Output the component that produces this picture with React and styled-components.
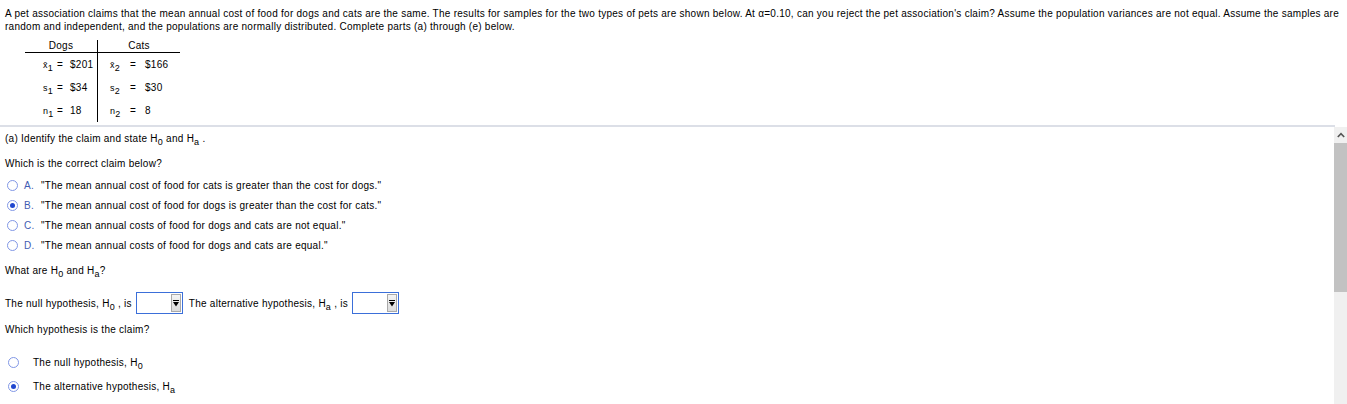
import React from "react";
import styled, { createGlobalStyle } from "styled-components";

const GlobalStyle = createGlobalStyle`
  html, body { margin: 0; padding: 0; background: #fff; }
  body {
    font-family: "Liberation Sans", Arial, sans-serif;
    font-size: 10px;
    letter-spacing: 0.26px;
    color: #000;
  }
`;

const Page = styled.div`
  width: 1347px;
  height: 404px;
  overflow: hidden;
  display: flex;
  flex-direction: column;
`;

const Intro = styled.div`
  padding: 7px 5px 0 5px;
  line-height: 13px;
`;

const IntroLine = styled.span`
  display: block;
  white-space: nowrap;
`;

const DataTable = styled.div`
  margin: 7px 0 0 25px;
  display: grid;
  grid-template-columns: 73px 82px;
  width: 155px;
`;

const HeadCell = styled.div`
  height: 12px;
  line-height: 12px;
  text-align: center;
  border-bottom: 1px solid #000;
  border-right: ${(p) => (p.$divider ? "1px solid #000" : "none")};
`;

const DataCell = styled.div`
  height: 23px;
  display: flex;
  align-items: center;
  padding-left: ${(p) => p.$pad}px;
  border-right: ${(p) => (p.$divider ? "1px solid #000" : "none")};
  white-space: nowrap;
`;

const VarSlot = styled.span`
  display: inline-block;
  width: ${(p) => p.$w}px;
  font-size: 9px;
`;

const EqSlot = styled.span`
  display: inline-block;
  width: ${(p) => p.$w}px;
`;

const Sub = styled.sub`
  font-size: ${(p) => p.$size || 9}px;
  vertical-align: -3px;
  line-height: 0;
`;

const Divider = styled.div`
  margin-top: 3px;
  height: 2px;
  width: 1335px;
  background: #dcdfe7;
  flex: none;
`;

const Pane = styled.div`
  flex: 1;
  display: flex;
  min-height: 0;
`;

const Content = styled.div`
  flex: 1;
  padding: 5px 0 0 5px;
`;

const TextLine = styled.div`
  line-height: 13px;
  margin-top: ${(p) => p.$mt || 0}px;
  white-space: nowrap;
`;

const OptionList = styled.div`
  margin-top: ${(p) => p.$mt}px;
  display: flex;
  flex-direction: column;
`;

const OptionRow = styled.div`
  height: ${(p) => p.$h}px;
  display: flex;
  align-items: center;
  white-space: nowrap;
`;

const Label = styled.span`
  line-height: 13px;
  white-space: nowrap;
`;

const Radio = styled.span`
  box-sizing: border-box;
  width: 11px;
  height: 11px;
  margin-left: ${(p) => p.$ml}px;
  margin-right: ${(p) => p.$mr}px;
  border-radius: 50%;
  border: 1.5px solid #8197e6;
  background: #fff;
  display: inline-flex;
  align-items: center;
  justify-content: center;
  flex: none;
  &::after {
    content: "";
    display: ${(p) => (p.$checked ? "block" : "none")};
    width: 5px;
    height: 5px;
    border-radius: 50%;
    background: #1f46cf;
  }
`;

const Letter = styled.span`
  display: inline-block;
  width: 17px;
  color: #3f5cb3;
`;

const HypRow = styled.div`
  margin-top: 15px;
  height: 22px;
  display: flex;
  align-items: center;
  white-space: nowrap;
`;

const Select = styled.span`
  box-sizing: border-box;
  width: 47px;
  height: 22px;
  margin: 0 6px 0 4px;
  border: 1px solid #3b6fd9;
  background: #fff;
  display: inline-flex;
  justify-content: flex-end;
  align-items: center;
  padding-right: 1px;
  flex: none;
`;

const SelectButton = styled.span`
  box-sizing: border-box;
  width: 10px;
  height: 18px;
  border: 1px solid #a9a9a9;
  background: linear-gradient(#f4f4f4, #dcdcdc);
  display: inline-flex;
  align-items: center;
  justify-content: center;
`;

const Scrollbar = styled.div`
  width: 13px;
  flex: none;
  background: #f0f0f0;
  display: flex;
  flex-direction: column;
`;

const ScrollButton = styled.div`
  height: 16px;
  display: flex;
  align-items: center;
  justify-content: center;
`;

const Thumb = styled.div`
  height: 149px;
  background: #c2c2c2;
`;

const H = ({ s }) => (
  <>
    H<Sub>{s}</Sub>
  </>
);

const Var = ({ v, i, w }) => (
  <VarSlot $w={w}>
    {v}
    <Sub $size={9}>{i}</Sub>
  </VarSlot>
);

const rows = [
  { l: ["x\u0304", "1", "$201"], r: ["x\u0304", "2", "$166"] },
  { l: ["s", "1", "$34"], r: ["s", "2", "$30"] },
  { l: ["n", "1", "18"], r: ["n", "2", "8"] },
];

const claims = [
  { k: "A.", t: "\"The mean annual cost of food for cats is greater than the cost for dogs.\"" },
  { k: "B.", t: "\"The mean annual cost of food for dogs is greater than the cost for cats.\"", c: true },
  { k: "C.", t: "\"The mean annual costs of food for dogs and cats are not equal.\"" },
  { k: "D.", t: "\"The mean annual costs of food for dogs and cats are equal.\"" },
];

const Caret = () => (
  <svg width="8" height="6" viewBox="0 0 8 6">
    <path d="M0.8 5 L4 1.6 L7.2 5" fill="none" stroke="#555" strokeWidth="1.6" />
  </svg>
);

const DownIcon = () => (
  <svg width="6" height="7" viewBox="0 0 6 7">
    <rect x="0" y="0" width="6" height="1" fill="#000" />
    <path d="M0 2 L6 2 L3 6.5 Z" fill="#000" />
  </svg>
);

const Dropdown = () => (
  <Select>
    <SelectButton>
      <DownIcon />
    </SelectButton>
  </Select>
);

export default function App() {
  return (
    <>
      <GlobalStyle />
      <Page>
        <Intro>
          <IntroLine>
            A pet association claims that the mean annual cost of food for dogs and cats are the same. The results for samples for the two types of pets are shown below. At α=0.10, can you reject the pet association's claim? Assume the population variances are not equal. Assume the samples are
          </IntroLine>
          <IntroLine>
            random and independent, and the populations are normally distributed. Complete parts (a) through (e) below.
          </IntroLine>
        </Intro>
        <DataTable>
          <HeadCell $divider>Dogs</HeadCell>
          <HeadCell>Cats</HeadCell>
          {rows.map((r, idx) => (
            <React.Fragment key={idx}>
              <DataCell $divider $pad={18}>
                <Var v={r.l[0]} i={r.l[1]} w={14} />
                <EqSlot $w={13}>=</EqSlot>
                {r.l[2]}
              </DataCell>
              <DataCell $pad={12}>
                <Var v={r.r[0]} i={r.r[1]} w={20} />
                <EqSlot $w={15}>=</EqSlot>
                {r.r[2]}
              </DataCell>
            </React.Fragment>
          ))}
        </DataTable>
        <Divider />
        <Pane>
          <Content>
            <TextLine>
              (a) Identify the claim and state <H s="0" /> and <H s="a" /> .
            </TextLine>
            <TextLine $mt={12}>Which is the correct claim below?</TextLine>
            <OptionList $mt={5}>
              {claims.map((c) => (
                <OptionRow key={c.k} $h={20}>
                  <Radio $ml={2} $mr={6} $checked={c.c} />
                  <Letter>{c.k}</Letter>
                  <Label>{c.t}</Label>
                </OptionRow>
              ))}
            </OptionList>
            <TextLine $mt={9}>
              What are <H s="0" /> and <H s="a" />?
            </TextLine>
            <HypRow>
              <Label>
                The null hypothesis, <H s="0" /> , is
              </Label>
              <Dropdown />
              <Label>
                The alternative hypothesis, <H s="a" /> , is
              </Label>
              <Dropdown />
            </HypRow>
            <TextLine $mt={9}>Which hypothesis is the claim?</TextLine>
            <OptionList $mt={14}>
              <OptionRow $h={24}>
                <Radio $ml={3} $mr={14} />
                <Label>
                  The null hypothesis, <H s="0" />
                </Label>
              </OptionRow>
              <OptionRow $h={24}>
                <Radio $ml={3} $mr={14} $checked />
                <Label>
                  The alternative hypothesis, <H s="a" />
                </Label>
              </OptionRow>
            </OptionList>
          </Content>
          <Scrollbar>
            <ScrollButton>
              <Caret />
            </ScrollButton>
            <Thumb />
          </Scrollbar>
        </Pane>
      </Page>
    </>
  );
}
